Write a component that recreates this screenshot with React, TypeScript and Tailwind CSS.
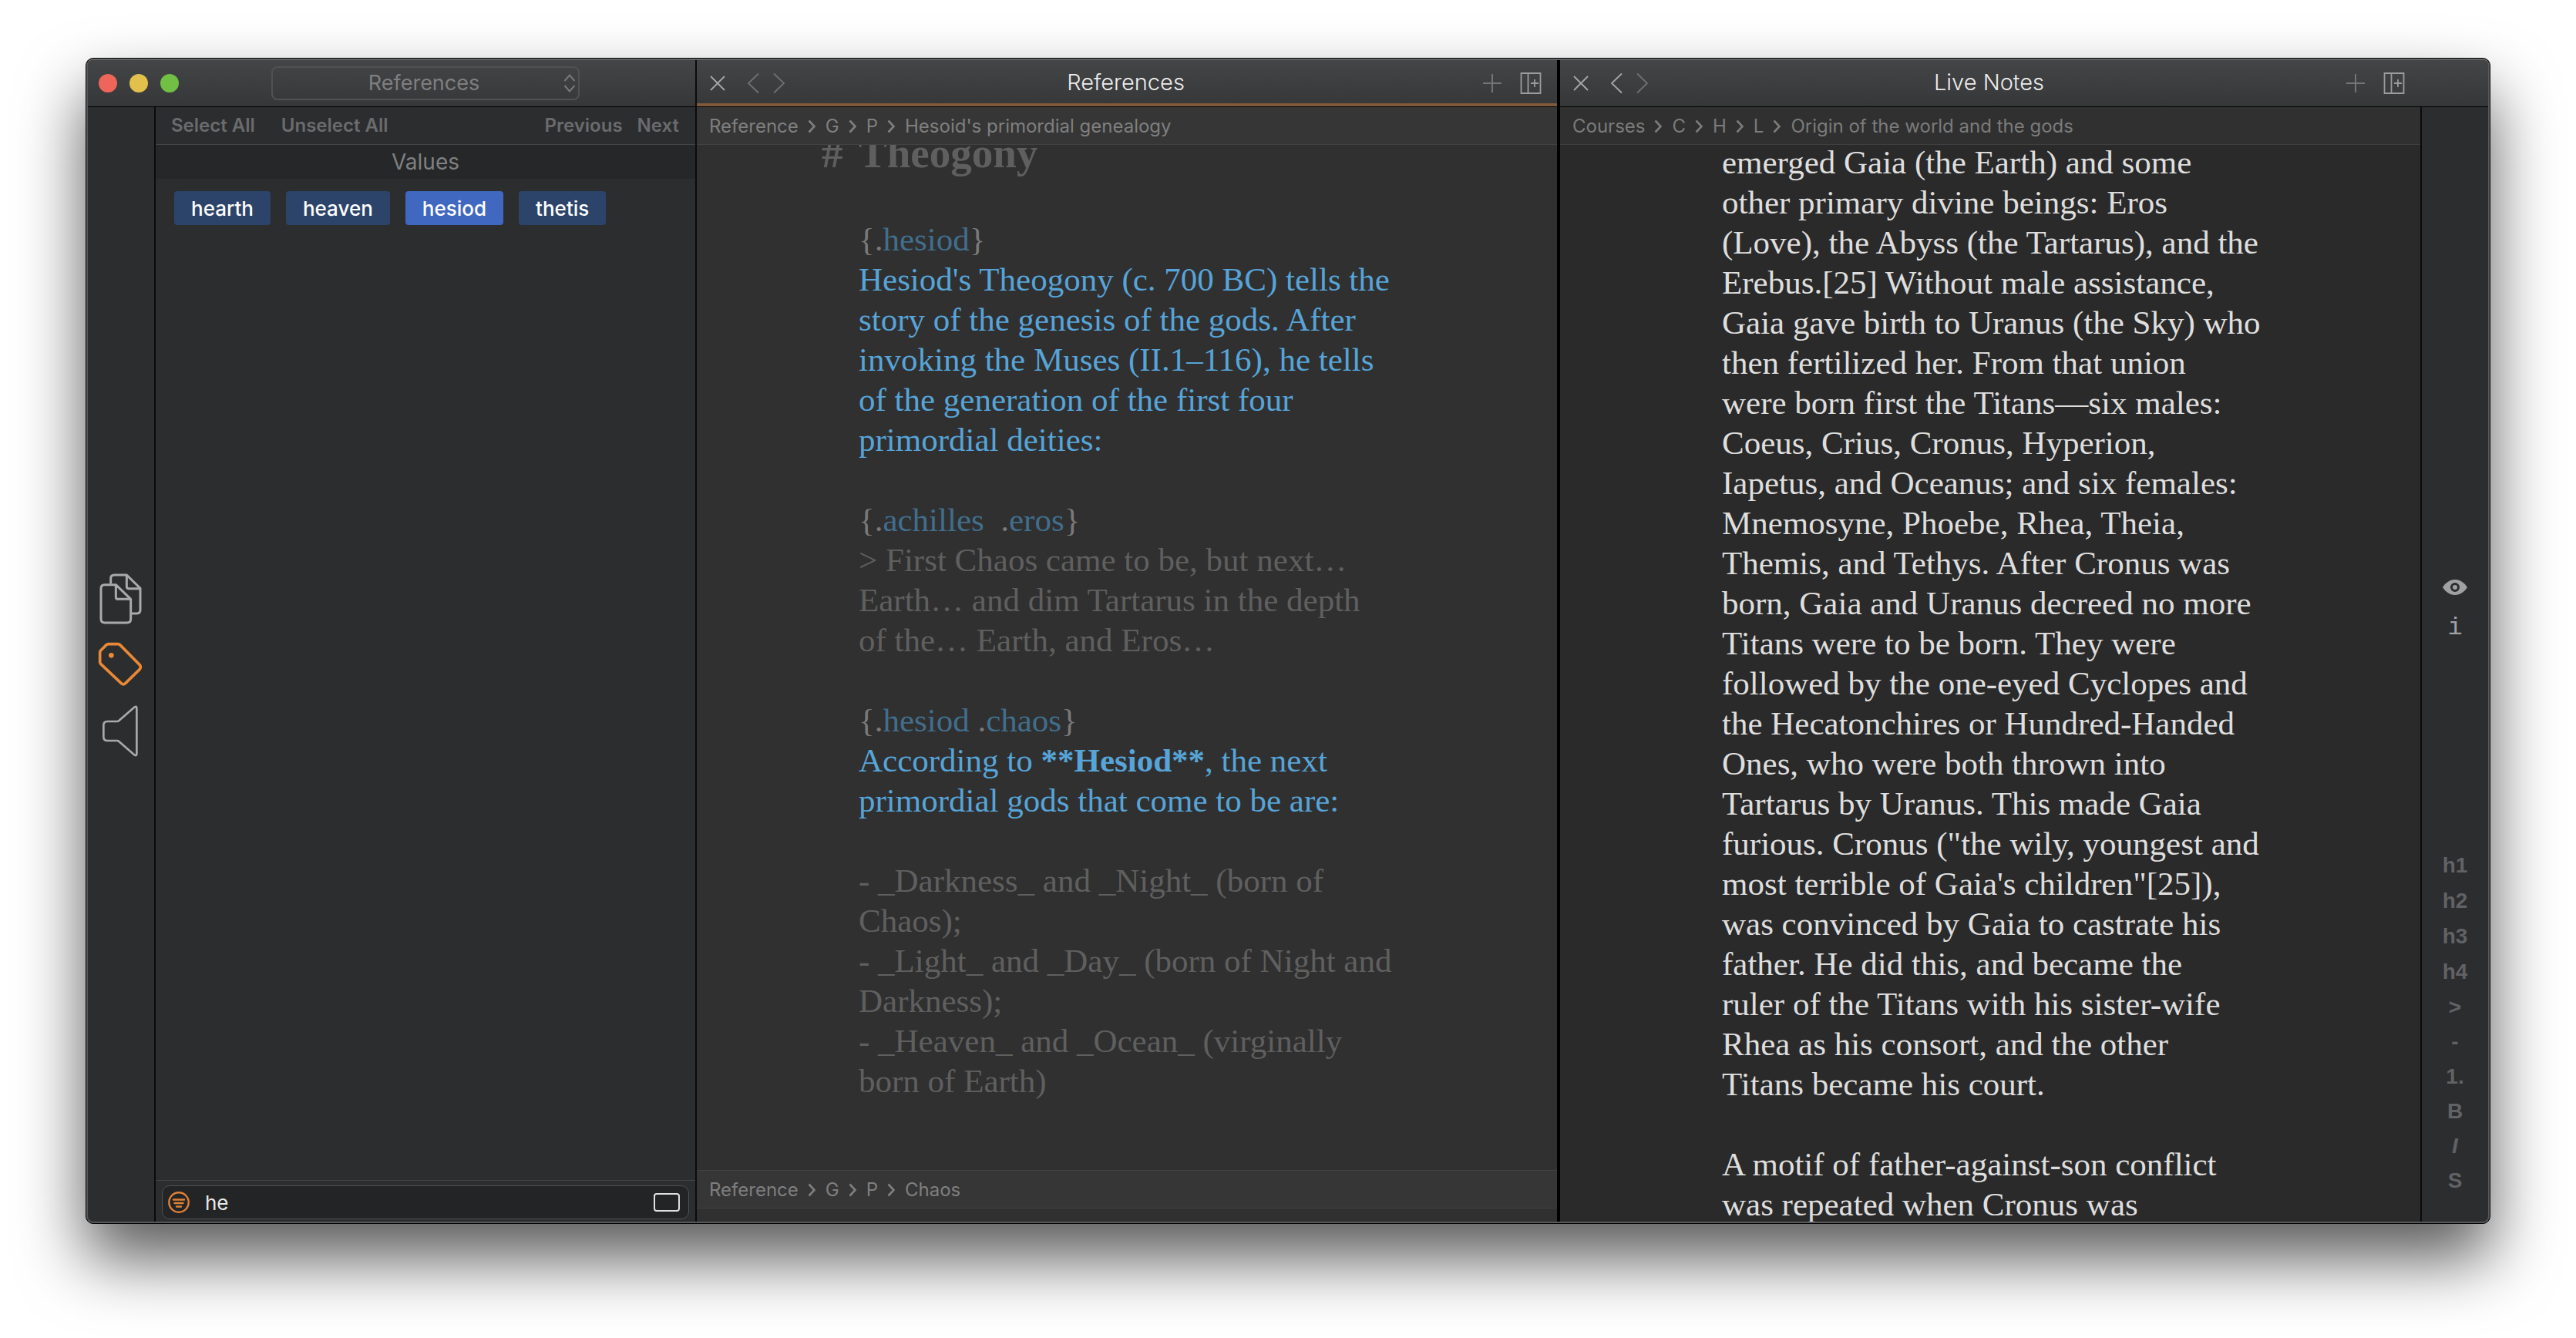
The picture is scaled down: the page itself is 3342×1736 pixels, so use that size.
import type { ReactNode } from "react";

const VALUES = [
  { name: "hearth", active: false },
  { name: "heaven", active: false },
  { name: "hesiod", active: true },
  { name: "thetis", active: false },
];

const NOTE_LINES = [
  "emerged Gaia (the Earth) and some",
  "other primary divine beings: Eros",
  "(Love), the Abyss (the Tartarus), and the",
  "Erebus.[25] Without male assistance,",
  "Gaia gave birth to Uranus (the Sky) who",
  "then fertilized her. From that union",
  "were born first the Titans—six males:",
  "Coeus, Crius, Cronus, Hyperion,",
  "Iapetus, and Oceanus; and six females:",
  "Mnemosyne, Phoebe, Rhea, Theia,",
  "Themis, and Tethys. After Cronus was",
  "born, Gaia and Uranus decreed no more",
  "Titans were to be born. They were",
  "followed by the one-eyed Cyclopes and",
  "the Hecatonchires or Hundred-Handed",
  "Ones, who were both thrown into",
  "Tartarus by Uranus. This made Gaia",
  "furious. Cronus (\"the wily, youngest and",
  "most terrible of Gaia's children\"[25]),",
  "was convinced by Gaia to castrate his",
  "father. He did this, and became the",
  "ruler of the Titans with his sister-wife",
  "Rhea as his consort, and the other",
  "Titans became his court.",
];

const MOTIF_LINES = ["A motif of father-against-son conflict", "was repeated when Cronus was"];

const HEADINGS = ["h1", "h2", "h3", "h4"];
const FORMATS = [">", "-", "1.", "B", "I", "S"];

function Lines({ lines }: { lines: string[] }) {
  return (
    <p>
      {lines.map((line) => (
        <span key={line} className="block">
          {line}
        </span>
      ))}
    </p>
  );
}

function Tags({ children }: { children: ReactNode }) {
  return <p className="whitespace-pre text-[#7a7a7a]">{children}</p>;
}

function Tag({ children }: { children: ReactNode }) {
  return <span className="text-[#416e8c]">{children}</span>;
}

function Breadcrumb({ items, className }: { items: string[]; className: string }) {
  return (
    <nav aria-label="Breadcrumb" className={className}>
      <ol className="flex h-12 items-center gap-3 pt-[2px] pl-4 text-[24px]">
        {items.map((item, i) => (
          <li key={item} className="flex items-center gap-3">
            {i > 0 && (
              <svg width="11" height="18" viewBox="0 0 11 18" fill="none" stroke="currentColor" strokeWidth="2.6" aria-hidden="true">
                <path d="M1.5 1.5 8.5 9 1.5 16.5" />
              </svg>
            )}
            <a href="#">{item}</a>
          </li>
        ))}
      </ol>
    </nav>
  );
}

function PaneHeader({ title, focused, canGoBack }: { title: string; focused?: boolean; canGoBack?: boolean }) {
  return (
    <header
      className={
        focused
          ? "relative grid min-w-0 flex-1 grid-cols-[1fr_auto_1fr] items-center pr-[20px] pl-[17px] after:absolute after:inset-x-0 after:bottom-0 after:h-1 after:bg-[#80593a]"
          : "relative grid min-w-0 flex-1 grid-cols-[1fr_auto_1fr] items-center pr-[20px] pl-[17px]"
      }
    >
      <div className="flex items-center text-[#a6a7a8]">
        <button aria-label="Close pane">
          <svg width="20" height="20" viewBox="0 0 20 20" fill="none" stroke="currentColor" strokeWidth="1.8">
            <path d="M1 1 19 19M19 1 1 19" />
          </svg>
        </button>
        <button aria-label="Back" className={canGoBack ? "ml-7" : "ml-7 text-[#6f7072]"}>
          <svg width="16" height="28" viewBox="0 0 16 28" fill="none" stroke="currentColor" strokeWidth="1.8">
            <path d="M15 1.5 2 14 15 26.5" />
          </svg>
        </button>
        <button aria-label="Forward" className="ml-[18px] text-[#6f7072]">
          <svg width="16" height="28" viewBox="0 0 16 28" fill="none" stroke="currentColor" strokeWidth="1.8">
            <path d="M1 1.5 14 14 1 26.5" />
          </svg>
        </button>
      </div>
      <h2 className="pb-[3px] text-[29px] leading-9 font-light text-[#ececec]">{title}</h2>
      <div className="flex items-center justify-end gap-[24px]">
        <button aria-label="Add" className="text-[#747577]">
          <svg width="24" height="24" viewBox="0 0 24 24" fill="none" stroke="currentColor" strokeWidth="2">
            <path d="M12 0V24M0 12H24" />
          </svg>
        </button>
        <button aria-label="Add pane" className="text-[#9b9c9d]">
          <svg width="28" height="28" viewBox="0 0 28 28" fill="none" stroke="currentColor" strokeWidth="1.8">
            <path d="M1.5 1H26.5V27H1.5ZM10.500 1V27M19 9V19M14 14H24" />
          </svg>
        </button>
      </div>
    </header>
  );
}

function Titlebar() {
  return (
    <div className="flex h-[61px] shrink-0 border-b border-black bg-linear-to-b from-[#444546] to-[#363739]">
      <div className="flex w-[790px] shrink-0 items-center border-r-2 border-[#0b0b0c] pl-[14px]">
        <div className="flex gap-4">
          <button aria-label="Close" className="size-6 rounded-full bg-[#ee6559]" />
          <button aria-label="Minimize" className="size-6 rounded-full bg-[#e1c04c]" />
          <button aria-label="Zoom" className="size-6 rounded-full bg-[#72bf46]" />
        </div>
        <div className="relative ml-[120px]">
          <select
            aria-label="Project"
            className="block h-11 w-[400px] appearance-none rounded-lg border-2 border-[#505153] bg-transparent pr-1 text-center text-[27px] leading-9 text-[#7e7f80]"
          >
            <option>References</option>
          </select>
          <svg
            className="pointer-events-none absolute top-[10px] right-[5px] text-[#77787a]"
            width="16" height="24" viewBox="0 0 16 24" fill="none" stroke="currentColor" strokeWidth="2" aria-hidden="true"
          >
            <path d="M1.500 9 8 1.500 14.500 9M1.500 15 8 22.500 14.500 15" />
          </svg>
        </div>
      </div>
      <PaneHeader title="References" focused />
      <div className="w-1 bg-black" />
      <PaneHeader title="Live Notes" canGoBack />
      <div className="w-[88px] shrink-0" />
    </div>
  );
}

function LeftRail() {
  return (
    <nav aria-label="Sections" className="flex w-[88px] shrink-0 flex-col items-center justify-center gap-[23px] border-r-2 border-[#0b0b0c] pt-[2px] pr-[2px] text-[#a8aaac]">
      <button aria-label="Documents">
        <svg width="55" height="66" viewBox="86 73 165 198" fill="none" stroke="currentColor" strokeWidth="9" strokeLinejoin="round">
          <path d="M130 113V93Q130 79 144 79H192L245 131V215Q245 229 231 229H210M192 79V124Q192 132 200 132H245" />
          <path d="M92 131Q92 117 106 117H150L208 173V250Q208 265 193 265H107Q92 265 92 250ZM150 117V165Q150 173 158 173H208" />
        </svg>
      </button>
      <button aria-label="Tags" className="text-[#e98836]">
        <svg width="58" height="58" viewBox="81 342 174 174" fill="none" stroke="currentColor" strokeWidth="11">
          <path d="M122 350H160Q164 350 167 353L244 431Q250 439 244 448L188 503Q180 510 172 503L92 427Q89 424 89 420V382Q89 378 92 375L114 353Q117 350 122 350Z" />
          <circle cx="133" cy="394" r="10" fill="currentColor" stroke="none" />
        </svg>
      </button>
      <button aria-label="Announcements">
        <svg width="48" height="68" viewBox="96 581 144 204" fill="none" stroke="currentColor" strokeWidth="8">
          <path d="M103 662Q103 647 118 647H156Q160 647 163 644L224 591Q232 586 232 596V772Q232 783 224 778L163 725Q160 722 156 722H118Q103 722 103 707Z" />
        </svg>
      </button>
    </nav>
  );
}

function ValuesPanel() {
  return (
    <section className="flex w-[702px] shrink-0 flex-col border-r-2 border-[#0b0b0c]">
      <div className="flex h-[49px] items-center justify-between border-b border-[#434446] pr-[21px] pl-[20px] text-[24px] font-semibold text-[#6a6b6d]">
        <div className="flex gap-[34px]">
          <button>Select All</button>
          <button>Unselect All</button>
        </div>
        <div className="flex gap-[19px]">
          <button>Previous</button>
          <button>Next</button>
        </div>
      </div>
      <h3 className="bg-[#262729] text-center text-[28px] leading-[44px] text-[#7f8081]">Values</h3>
      <div className="flex flex-wrap gap-5 px-6 py-4">
        {VALUES.map((v) => (
          <button
            key={v.name}
            className={
              v.active
                ? "h-11 rounded-sm bg-[#4068c0] px-[22px] text-[26px] font-medium text-white"
                : "h-11 rounded-sm bg-[#2c446a] px-[22px] text-[26px] font-medium text-white"
            }
          >
            {v.name}
          </button>
        ))}
      </div>
      <div className="mt-auto border-t border-[#434446] px-2 pt-[6px] pb-[3px]">
        <div className="flex h-11 items-center rounded-[10px] border border-[#505153] bg-[#232426] pr-[11px] pl-[7px]">
          <svg width="28" height="28" viewBox="0 0 28 28" fill="none" stroke="#e08135" strokeWidth="2.400" strokeLinecap="round" aria-hidden="true">
            <circle cx="14" cy="14" r="12.700" />
            <path d="M7 10.500H21M8.500 15H19.500M11 19.500H17" />
          </svg>
          <input
            aria-label="Filter values"
            defaultValue="he"
            className="ml-5 min-w-0 flex-1 bg-transparent text-[26px] text-[#e8e8e8] outline-none"
          />
          <button aria-label="Toggle match mode" className="h-6 w-[34px] rounded-[4px] border-2 border-[#dfe0e0]" />
        </div>
      </div>
    </section>
  );
}

function ReferencesPane() {
  return (
    <article className="flex min-w-0 flex-1 flex-col bg-[#303030]">
      <Breadcrumb
        items={["Reference", "G", "P", "Hesoid's primordial genealogy"]}
        className="border-b border-[#424242] bg-[#363636] text-[#7f7f7f]"
      />
      <div className="min-h-0 flex-1 overflow-hidden pl-[210px] font-['Liberation_Serif',serif] text-[43px] leading-[52px] whitespace-nowrap text-[#5f5f5f]">
        <h1 className="-mt-[21px] mb-[54px] -ml-[48px] flex text-[55px] leading-[64px] font-bold">
          <span className="w-12">#</span>Theogony
        </h1>
        <div className="flex flex-col gap-[52px]">
          <div>
            <Tags>
              {"{."}<Tag>hesiod</Tag>{"}"}
            </Tags>
            <div className="text-[#57a4d8]">
              <Lines
                lines={[
                  "Hesiod's Theogony (c. 700 BC) tells the",
                  "story of the genesis of the gods. After",
                  "invoking the Muses (II.1–116), he tells",
                  "of the generation of the first four",
                  "primordial deities:",
                ]}
              />
            </div>
          </div>
          <div>
            <Tags>
              {"{."}<Tag>achilles</Tag>{"  ."}<Tag>eros</Tag>{"}"}
            </Tags>
            <Lines
              lines={[
                "> First Chaos came to be, but next…",
                "Earth… and dim Tartarus in the depth",
                "of the… Earth, and Eros…",
              ]}
            />
          </div>
          <div>
            <Tags>
              {"{."}<Tag>hesiod</Tag>{" ."}<Tag>chaos</Tag>{"}"}
            </Tags>
            <p className="text-[#57a4d8]">
              According to <strong>**Hesiod**</strong>, the next
              <br />
              primordial gods that come to be are:
            </p>
          </div>
          <Lines
            lines={[
              "- _Darkness_ and _Night_ (born of",
              "Chaos);",
              "- _Light_ and _Day_ (born of Night and",
              "Darkness);",
              "- _Heaven_ and _Ocean_ (virginally",
              "born of Earth)",
            ]}
          />
        </div>
      </div>
      <Breadcrumb
        items={["Reference", "G", "P", "Chaos"]}
        className="mb-[17px] border-y border-[#424242] bg-[#363636] text-[#7f7f7f]"
      />
    </article>
  );
}

function NotesPane() {
  return (
    <article className="flex min-w-0 flex-1 flex-col bg-[#2a2a2a]">
      <Breadcrumb
        items={["Courses", "C", "H", "L", "Origin of the world and the gods"]}
        className="border-b border-[#3f3f3f] bg-[#303030] text-[#7b7b7b]"
      />
      <div className="min-h-0 flex-1 overflow-hidden pl-[210px] font-['Liberation_Serif',serif] text-[43px] leading-[52px] whitespace-nowrap text-[#dedede]">
        <div className="-mt-[3px] flex flex-col gap-[52px]">
          <Lines lines={NOTE_LINES} />
          <Lines lines={MOTIF_LINES} />
        </div>
      </div>
    </article>
  );
}

function RightRail() {
  return (
    <aside className="flex w-[88px] shrink-0 flex-col items-center border-l-2 border-[#0b0b0c] pb-[31px]">
      <div className="flex-[16]" />
      <div className="flex flex-col items-center gap-[26px] text-[#a0a1a3]">
        <button aria-label="Preview">
          <svg width="32" height="20" viewBox="0 0 32 20" aria-hidden="true">
            <path
              fill="currentColor"
              fillRule="evenodd"
              d="M16 0C23 0 28.500 4.500 32 10C28.500 15.500 23 20 16 20C9 20 3.500 15.500 0 10C3.500 4.500 9 0 16 0ZM16 4A6 6 0 1 0 16 16A6 6 0 1 0 16 4ZM16 7A3 3 0 1 1 16 13A3 3 0 1 1 16 7Z"
            />
          </svg>
        </button>
        <button aria-label="Information" className="h-[34px] font-['Liberation_Mono',monospace] text-[32px] leading-[34px]">
          i
        </button>
      </div>
      <div className="flex-[7]" />
      <div className="flex flex-col items-center font-['Liberation_Sans',sans-serif] text-[28px] font-bold text-[#616265]">
        {HEADINGS.map((label) => (
          <button key={label} className="h-[46px]">
            {label}
          </button>
        ))}
        {FORMATS.map((label) => (
          <button key={label} className={label === "I" ? "h-[45px] italic" : "h-[45px]"}>
            {label}
          </button>
        ))}
      </div>
    </aside>
  );
}

export default function App() {
  return (
    <div className="flex h-screen flex-col bg-white px-[111px] pt-[75px] pb-[148px] font-['Inter',sans-serif]">
      <main className="flex min-h-0 flex-1 flex-col rounded-[10px] border border-black bg-black shadow-[0_45px_85px_rgba(0,0,0,0.65)]">
        <div className="flex min-h-0 flex-1 flex-col overflow-hidden rounded-[9px] border-2 border-[#575859] border-t-[#646665] bg-[#2c2d2f]">
          <Titlebar />
          <div className="flex min-h-0 flex-1">
            <LeftRail />
            <ValuesPanel />
            <ReferencesPane />
            <div className="w-1 bg-black" />
            <NotesPane />
            <RightRail />
          </div>
        </div>
      </main>
    </div>
  );
}
